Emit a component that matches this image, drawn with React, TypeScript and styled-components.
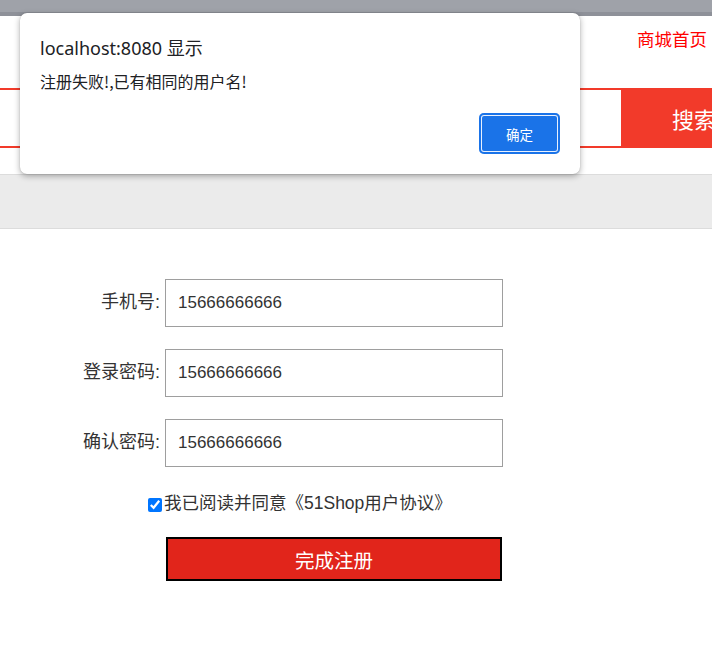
import React from "react";
import styled, { createGlobalStyle } from "styled-components";

const Global = createGlobalStyle`
  html, body { margin: 0; padding: 0; background: #fff; overflow: hidden; }
  body { font-family: "Liberation Sans", "Noto Sans CJK SC", sans-serif; color: #333; }
  #root { width: 712px; height: 648px; position: relative; overflow: hidden; }
`;

const Page = styled.div`
  position: relative;
  width: 712px;
  height: 648px;
  overflow: hidden;
`;

const TopStrip = styled.div`
  height: 12px;
  background: #9fa2a9;
  border-bottom: 4px solid #8e9199;
`;

const Header = styled.header`
  height: 158px;
  display: flex;
  flex-direction: column;
`;

const TopLinks = styled.div`
  display: flex;
  justify-content: flex-end;
  padding: 10px 5px 0 0;
  height: 72px;
  box-sizing: border-box;
`;

const HomeLink = styled.a`
  color: #ff0000;
  font-size: 17.5px;
  line-height: 26px;
  text-decoration: none;
  font-family: "Noto Sans CJK SC", sans-serif;
`;

const SearchRow = styled.div`
  display: flex;
  margin-left: -200px;
  height: 60px;
`;

const SearchInput = styled.div`
  flex: 1;
  border: 2px solid #f23a2a;
  border-right: none;
  background: #fff;
  display: flex;
  align-items: center;
  justify-content: flex-end;
  color: #7fa6d6;
  font-size: 14px;
  font-family: "Noto Sans CJK SC", sans-serif;
  overflow: hidden;
`;

const Hint = styled.span`
  margin-right: 820px;
`;

const SearchButton = styled.button`
  width: 146px;
  flex: none;
  margin-right: -55px;
  background: #f23a2a;
  border: none;
  color: #fff;
  font-size: 22px;
  font-family: "Noto Sans CJK SC", sans-serif;
  padding: 0;
  text-align: center;
`;

const NavBand = styled.div`
  height: 53px;
  background: #ebebeb;
  border-top: 1px solid #dcdcdc;
  border-bottom: 1px solid #dcdcdc;
`;

const Form = styled.form`
  display: flex;
  flex-direction: column;
  gap: 22px;
  padding-top: 50px;
`;

const Row = styled.div`
  display: flex;
  align-items: center;
`;

const Label = styled.label`
  width: 165px;
  text-align: right;
  font-size: 18px;
  line-height: 24px;
  margin-top: -2px;
  color: #333;
  padding-right: 5px;
  box-sizing: border-box;
`;

const Input = styled.input`
  width: 338px;
  height: 48px;
  box-sizing: border-box;
  border: 1px solid #9e9e9e;
  padding: 0 12px;
  font-size: 17px;
  color: #333;
  font-family: "Liberation Sans", "Noto Sans CJK SC", sans-serif;
  outline: none;
`;

const AgreeRow = styled.div`
  display: flex;
  align-items: flex-end;
  padding-left: 148px;
  margin-top: 1px;
  font-size: 17.5px;
  color: #333;
  height: 24px;
`;

const Check = styled.input`
  width: 14px;
  height: 14px;
  margin: 0 2px 2px 0;
  accent-color: #0075ff;
`;

const Submit = styled.button`
  margin: 1px 0 0 166px;
  width: 336px;
  height: 44px;
  background: #e1251b;
  border: 2px solid #000;
  color: #fff;
  font-size: 19.5px;
  font-family: "Noto Sans CJK SC", sans-serif;
  padding: 0;
`;

const Dialog = styled.div`
  position: absolute;
  left: 20px;
  top: 13px;
  width: 560px;
  height: 161px;
  box-sizing: border-box;
  background: #fff;
  border-radius: 7px;
  box-shadow: 0 2px 6px rgba(0, 0, 0, 0.32), 0 0 1px rgba(0, 0, 0, 0.25);
  padding: 22px 20px 0 20px;
  display: flex;
  flex-direction: column;
`;

const DialogTitle = styled.div`
  font-family: "Noto Sans", "Noto Sans CJK SC", sans-serif;
  font-size: 18px;
  line-height: 26px;
  color: #202124;
`;

const DialogMsg = styled.div`
  font-family: "Noto Sans CJK SC", sans-serif;
  font-size: 16px;
  line-height: 22px;
  color: #202124;
  margin-top: 9px;
`;

const DialogActions = styled.div`
  display: flex;
  justify-content: flex-end;
  margin-top: 21px;
`;

const OkButton = styled.button`
  width: 81px;
  height: 41px;
  border-radius: 5px;
  border: none;
  background: #1a73e8;
  color: #fff;
  font-size: 13.5px;
  font-family: "Noto Sans CJK SC", sans-serif;
  box-shadow: inset 0 0 0 2px #1a73e8, inset 0 0 0 3px #e8f0fe;
  padding: 0;
`;

export default function App() {
  return (
    <Page>
      <Global />
      <TopStrip />
      <Header>
        <TopLinks>
          <HomeLink href="#">商城首页</HomeLink>
        </TopLinks>
        <SearchRow>
          <SearchInput>
            <Hint>索</Hint>
          </SearchInput>
          <SearchButton>搜索</SearchButton>
        </SearchRow>
      </Header>
      <NavBand />
      <Form onSubmit={(e) => e.preventDefault()}>
        <Row>
          <Label>手机号:</Label>
          <Input defaultValue="15666666666" />
        </Row>
        <Row>
          <Label>登录密码:</Label>
          <Input defaultValue="15666666666" />
        </Row>
        <Row>
          <Label>确认密码:</Label>
          <Input defaultValue="15666666666" />
        </Row>
        <AgreeRow>
          <Check type="checkbox" defaultChecked />
          <span>我已阅读并同意《51Shop用户协议》</span>
        </AgreeRow>
        <Submit type="submit">完成注册</Submit>
      </Form>
      <Dialog>
        <DialogTitle>localhost:8080 显示</DialogTitle>
        <DialogMsg>注册失败!,已有相同的用户名!</DialogMsg>
        <DialogActions>
          <OkButton>确定</OkButton>
        </DialogActions>
      </Dialog>
    </Page>
  );
}
